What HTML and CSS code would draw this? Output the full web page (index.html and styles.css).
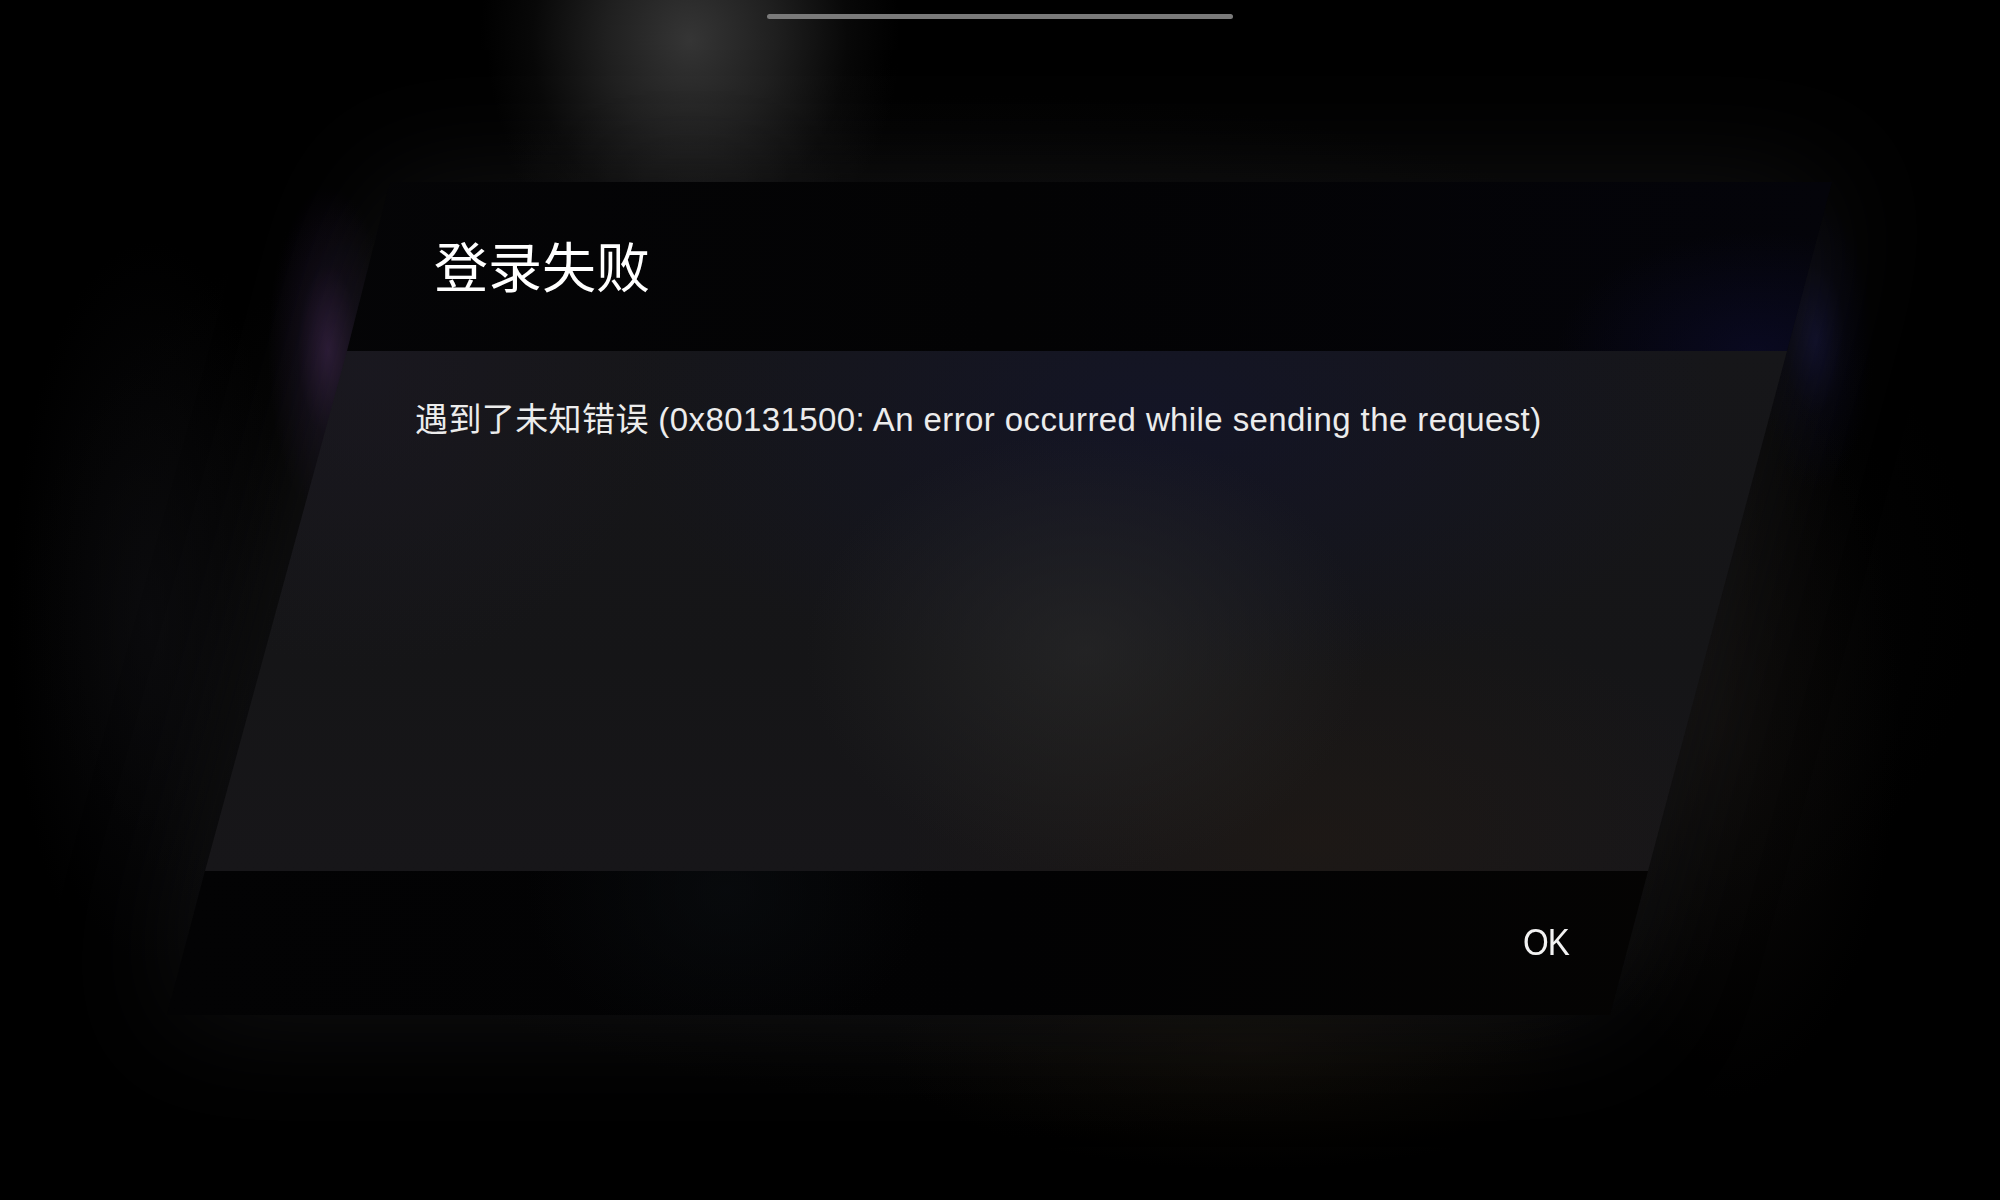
FILE: index.html
```html
<!DOCTYPE html>
<html lang="zh">
<head>
<meta charset="utf-8">
<title>登录失败</title>
<link rel="stylesheet" href="styles.css">
</head>
<body>
<div class="screen">
  <div class="handle"></div>
  <div class="dialog">
    <div class="dlg-header">
      <h1 class="title">登录失败</h1>
    </div>
    <div class="dlg-body">
      <p class="message">遇到了未知错误 (0x80131500: An error occurred while sending the request)</p>
    </div>
    <div class="dlg-footer">
      <span class="ok">OK</span>
    </div>
  </div>
</div>
</body>
</html>
```

FILE: styles.css
```css
html, body {
  margin: 0;
  padding: 0;
  width: 2000px;
  height: 1200px;
  overflow: hidden;
  background: #000;
}

.screen {
  width: 2000px;
  height: 1200px;
  display: flex;
  flex-direction: column;
  font-family: "Liberation Sans", "Noto Sans CJK SC", sans-serif;
  color: #ececec;
  background:
    radial-gradient(ellipse 210px 240px at 690px 40px, rgba(56,56,56,0.95) 0%, rgba(42,42,42,0.75) 40%, rgba(20,20,20,0.4) 75%, rgba(0,0,0,0) 100%),
    radial-gradient(ellipse 60px 170px at 328px 350px, rgba(78,45,100,0.55) 0%, rgba(40,25,60,0.28) 50%, rgba(0,0,0,0) 100%),
    radial-gradient(ellipse 60px 150px at 1815px 340px, rgba(28,28,90,0.45) 0%, rgba(15,15,50,0.22) 50%, rgba(0,0,0,0) 100%),
    radial-gradient(ellipse 360px 120px at 1250px 1050px, rgba(24,19,11,0.5) 0%, rgba(0,0,0,0) 100%),
    radial-gradient(ellipse 180px 380px at 1720px 720px, rgba(22,19,17,0.55) 0%, rgba(0,0,0,0) 100%),
    radial-gradient(ellipse 140px 380px at 150px 620px, rgba(18,18,22,0.55) 0%, rgba(0,0,0,0) 100%),
    radial-gradient(ellipse 980px 540px at 1000px 600px, rgba(14,14,14,1) 0%, rgba(8,8,8,0.8) 60%, rgba(0,0,0,0) 100%),
    #000;
}

.handle {
  width: 466px;
  height: 5px;
  margin: 14px 0 0 767px;
  border-radius: 3px;
  background: #7a7a7a;
  flex: none;
}

.dialog {
  width: 1666px;
  margin: 163px 0 0 166px;
  display: flex;
  flex-direction: column;
  filter: drop-shadow(0 0 60px rgba(38,38,40,0.45));
}

.dlg-header {
  height: 169px;
  display: flex;
  align-items: center;
  padding-left: 268px;
  box-sizing: border-box;
  clip-path: polygon(224px 0, 1666px 0, 1621px 100%, 181px 100%);
  background:
    radial-gradient(ellipse 200px 120px at 1590px 170px, rgba(12,12,42,0.7) 0%, rgba(0,0,0,0) 100%),
    linear-gradient(90deg, #050507 0%, #030304 50%, #04040a 100%);
}

.title {
  margin: 0;
  font-family: "Noto Sans CJK SC", sans-serif;
  font-weight: 400;
  font-size: 54px;
  line-height: 1;
  color: #ffffff;
  transform: translateY(-2px);
}

.dlg-body {
  height: 520px;
  box-sizing: border-box;
  padding: 49px 0 0 249px;
  clip-path: polygon(181px 0, 1621px 0, 1482px 100%, 39px 100%);
  background:
    radial-gradient(ellipse 280px 220px at 920px 300px, rgba(42,42,42,0.65) 0%, rgba(0,0,0,0) 100%),
    radial-gradient(ellipse 560px 280px at 1000px 60px, rgba(18,20,46,0.6) 0%, rgba(0,0,0,0) 100%),
    radial-gradient(ellipse 420px 240px at 1150px 490px, rgba(36,27,18,0.45) 0%, rgba(0,0,0,0) 100%),
    radial-gradient(ellipse 300px 300px at 200px 20px, rgba(28,25,36,0.55) 0%, rgba(0,0,0,0) 100%),
    linear-gradient(180deg, #161619 0%, #151517 60%, #171619 100%);
}

.message {
  margin: 0;
  font-size: 33px;
  line-height: 40px;
  color: #ececec;
  letter-spacing: 0.4px;
  white-space: nowrap;
}

.dlg-footer {
  height: 144px;
  display: flex;
  align-items: center;
  justify-content: flex-end;
  padding-right: 263px;
  box-sizing: border-box;
  clip-path: polygon(39px 0, 1482px 0, 1444px 100%, 1px 100%);
  background:
    radial-gradient(ellipse 200px 160px at 560px 20px, rgba(10,13,16,0.7) 0%, rgba(0,0,0,0) 100%),
    linear-gradient(90deg, #030304 0%, #020203 50%, #050403 100%);
}

.ok {
  font-size: 36px;
  line-height: 1;
  color: #f2f2f2;
  letter-spacing: -1px;
  transform: scaleX(0.92);
  transform-origin: right center;
}
```
